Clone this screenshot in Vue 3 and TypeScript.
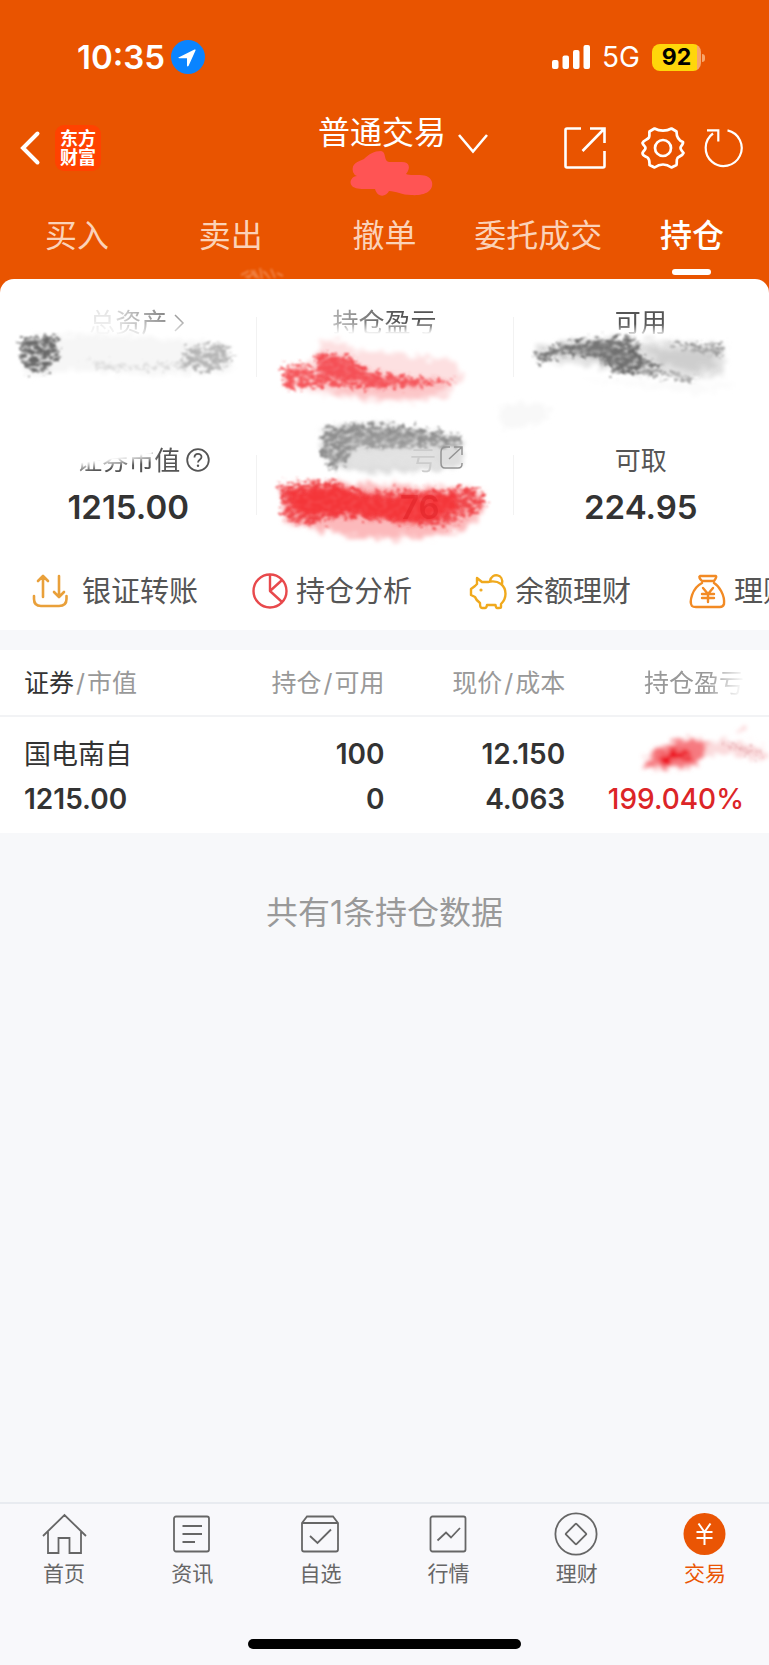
<script setup lang="ts">
import { ref } from 'vue'

interface Holding {
  name: string
  value: string
  amount: string
  available: string
  price: string
  cost: string
  ratio: string
}

const tabs: string[] = ['买入', '卖出', '撤单', '委托成交', '持仓']
const activeTab = ref('持仓')

const shortcuts = [
  { id: 'transfer', label: '银证转账' },
  { id: 'analysis', label: '持仓分析' },
  { id: 'balance', label: '余额理财' },
  { id: 'wealth', label: '理财' },
]

const holdings: Holding[] = [
  { name: '国电南自', value: '1215.00', amount: '100', available: '0', price: '12.150', cost: '4.063', ratio: '199.040%' },
]

const navItems = [
  { id: 'home', label: '首页' },
  { id: 'news', label: '资讯' },
  { id: 'watch', label: '自选' },
  { id: 'market', label: '行情' },
  { id: 'finance', label: '理财' },
  { id: 'trade', label: '交易' },
]
const activeNav = ref('trade')
</script>

<template>
  <div class="page">
    <header class="top">
      <div class="status">
        <div class="status-left">
          <span class="time">10:35</span>
          <svg class="locate" viewBox="0 0 34 34"><circle cx="17" cy="17" r="17" fill="#0a84ff" /><path d="M7.500 17.500 23.500 9.500Q25 9 24.500 10.500L17.500 26Q16.200 27 16 25.500V18.300H8.500Q6.800 18.200 7.500 17.500Z" fill="#fff" /></svg>
        </div>
        <div class="status-right">
          <svg class="signal" viewBox="0 0 38 24"><g fill="#fff"><rect y="15" width="6.500" height="9" rx="2" /><rect x="10.500" y="10.500" width="6.500" height="13.500" rx="2" /><rect x="21" y="5" width="6.500" height="19" rx="2" /><rect x="31.500" width="6.500" height="24" rx="2" /></g></svg>
          <span class="network">5G</span>
          <span class="battery"><span class="level">92</span></span>
        </div>
      </div>

      <div class="bar">
        <div class="bar-left">
          <button class="icon-btn" aria-label="返回"><svg class="back" viewBox="0 0 20 34"><path d="M17.500 2.500 3 17 17.500 31.500" fill="none" stroke="#fff" stroke-width="4" stroke-linecap="round" /></svg></button>
          <a class="logo" href="#home"><span>东方</span><span>财富</span></a>
        </div>
        <button class="account">
          普通交易
          <svg class="caret" viewBox="0 0 30 20"><path d="M1 1 15 17.500 29 1" fill="none" stroke="#fff" stroke-width="2.600" /></svg>
          <svg class="blob" viewBox="0 0 84 48"><path d="M3 22C1 13 8 12 14 9C19 4 24 1 31 1C37 2 33 11 39 12H50C60 11 61 18 56 24C62 27 79 21 82 32C84 42 73 46 61 45C52 45 46 41 39 41C37 46 28 49 25 39C16 39 6 40 2 36C-2 31 3 26 7 26Q4 25 3 22Z" fill="#ff5454" /></svg>
        </button>
        <div class="bar-right">
          <button class="icon-btn" aria-label="分享"><svg class="share" viewBox="0 0 42 42"><path d="M17 1.500H3Q1.500 1.500 1.500 3V39Q1.500 40.500 3 40.500H39Q40.500 40.500 40.500 39V24M26 1.500H40.500V16M40 2 18.500 24" fill="none" stroke="#fff" stroke-width="2.600" /></svg></button>
          <button class="icon-btn" aria-label="设置"><svg class="gear" viewBox="0 0 44 44"><path d="M13.500 2.500C17 4.500 18.500 4.700 22 4.700S27 4.500 30.500 2.500L35.500 5.500C35.500 10 36.500 14 42 16V17C41 20 39.500 20 39.500 22S41 24.500 42.500 27C41.500 30 36.500 30.500 36 33C35.500 35 36 37 35.500 39L30.500 41.500C27 39 25.500 38.500 22 38.500S17 39 13.500 41.500L8.500 39C8.500 36 9 33.500 6.500 31.500C4.500 30 1.500 30 1.500 27C2.500 24.500 4.500 24 4.500 22S2.500 20 1.500 17C2.500 14 6.500 14 8 11.500C9 9 8 7 8.500 5.500Z" fill="none" stroke="#fff" stroke-width="2.700" stroke-linejoin="round" /><circle cx="22" cy="22" r="8" fill="none" stroke="#fff" stroke-width="2.700" /></svg></button>
          <button class="icon-btn" aria-label="刷新"><svg class="refresh" viewBox="0 0 40 40"><path d="M23.500 2.400A18 18 0 1 1 9 5.500M3 2.300H14.300V13.500" fill="none" stroke="#fff" stroke-width="2.200" /></svg></button>
        </div>
      </div>

      <nav class="tabs">
        <button v-for="tab in tabs" :key="tab" class="tab" :class="{ active: tab === activeTab }" @click="activeTab = tab">{{ tab }}</button>
      </nav>
      <svg class="scuff" viewBox="0 0 44 12"><path d="M1 8 9 4M8 12 15 3M14 4 19 12M20 1 22 12M25 5 30 12M31 2 35 11M37 6 43 9M11 3 16 11M23 4 28 9M5 10 12 8" stroke="#f9b48d" stroke-width="2" opacity=".45" /></svg>
    </header>

    <main>
      <section class="card">
        <div class="summary">
          <div class="cell">
            <a class="label fade-total" href="#assets">总资产<svg class="after arrow" viewBox="0 0 12 18"><path d="M2 1 10 9 2 17" fill="none" stroke="#777" stroke-width="1.500" /></svg></a>
            <span class="figure"></span>
          </div>
          <div class="cell"><span class="label fade-gain">持仓盈亏</span><span class="figure"></span></div>
          <div class="cell"><span class="label fade-cash">可用</span><span class="figure"></span></div>
          <div class="cell">
            <span class="label"><span class="fade-market">证券市值</span><svg class="after" viewBox="0 0 24 24"><circle cx="12" cy="12" r="10.800" fill="none" stroke="#555" stroke-width="1.800" /><path d="M8.500 9.500C8.500 4.500 15.500 4.800 15.500 9C15.500 11.800 12 11.800 12 14.500" fill="none" stroke="#555" stroke-width="1.800" /><circle cx="12" cy="17.800" r="1.200" fill="#555" /></svg></span>
            <span class="figure">1215.00</span>
          </div>
          <div class="cell"><span class="label"></span><span class="figure"></span></div>
          <div class="cell"><span class="label">可取</span><span class="figure">224.95</span></div>

          <svg class="smudges" viewBox="0 0 769 280" preserveAspectRatio="none" aria-hidden="true">
            <defs>
              <filter id="brush" x="-10%" y="-30%" width="120%" height="160%">
                <feTurbulence type="fractalNoise" baseFrequency=".16 .24" numOctaves="4" seed="7" result="noise" />
                <feDisplacementMap in="SourceGraphic" in2="noise" scale="20" xChannelSelector="R" yChannelSelector="G" result="rough" />
                <feColorMatrix in="noise" type="matrix" values="0 0 0 0 0  0 0 0 0 0  0 0 0 0 0  0 0 3 0 -.7" result="grain" />
                <feComposite in="rough" in2="grain" operator="in" result="speckled" />
                <feGaussianBlur in="speckled" stdDeviation="1" />
              </filter>
              <filter id="wash" x="-10%" y="-30%" width="120%" height="160%">
                <feTurbulence type="fractalNoise" baseFrequency=".12 .25" numOctaves="3" seed="3" result="noise" />
                <feDisplacementMap in="SourceGraphic" in2="noise" scale="18" xChannelSelector="R" yChannelSelector="G" result="rough" />
                <feGaussianBlur in="rough" stdDeviation="2" />
              </filter>
            </defs>
            <g filter="url(#wash)">
              <path d="M22 38Q70 32 130 36T230 46L232 72Q160 76 110 72T25 78Z" fill="#f6f6f6" />
              <path d="M286 72Q300 62 316 60L322 40 345 42 355 50 455 60 462 80 450 96Q400 106 350 98L285 86Z" fill="#fde0e1" />
              <path d="M300 75 350 70 450 82 440 94Q390 104 340 94Z" fill="#fcc6c8" />
              <path d="M536 48Q580 35 640 40L724 46V74Q680 80 640 73T537 60Z" fill="#e2e2e2" />
              <path d="M323 130Q360 118 400 128L462 136V166Q400 176 345 170L322 155Z" fill="#dedede" />
              <path d="M280 186Q330 180 370 184L480 190 486 208 465 230Q400 245 340 234L285 222Z" fill="#fcb9bb" />
              <path d="M498 108Q530 98 552 108L540 124 502 130Z" fill="#f8f8f8" />
              <path d="M560 78 740 84 700 94 640 86Z" fill="#fbfbfb" />
            </g>
            <g filter="url(#brush)">
              <path d="M20 36 56 36 60 56 46 74 24 70Z" fill="#707070" />
              <path d="M26 42 50 40 48 60 32 66Z" fill="#666" />
              <path d="M185 48 222 42 234 62 212 70 180 68Z" fill="#b4b4b4" />
              <path d="M80 60 130 66 190 60 180 68 110 70Z" fill="#ddd" />
              <path d="M280 66 300 64 318 68 315 54 349 54 366 72 459 82 370 88Q320 84 285 90Z" fill="#f5565b" />
              <path d="M316 58 345 60 390 80 340 82Z" fill="#f44b51" />
              <path d="M534 54Q576 36 635 38L642 56 665 72 655 76 610 72 600 58Q570 48 541 65Z" fill="#757575" />
              <path d="M606 48 635 44 640 64 660 74 620 66Z" fill="#666" />
              <path d="M670 42 725 46 722 56 680 50Z" fill="#999" />
              <path d="M640 68 700 78 690 82 645 74Z" fill="#aaa" />
              <path d="M322 130Q350 120 400 126L462 136 460 148 405 140 360 146 336 172 322 156Z" fill="#8e8e8e" />
              <path d="M350 135 462 142 420 148 352 148Z" fill="#999" />
              <path d="M278 184 330 180 365 192 480 188 484 210 440 228 350 216 300 226 284 216Z" fill="#f0474c" />
            </g>
            <g filter="url(#wash)">
              <path d="M316 54 346 60 380 79 450 83 380 86 322 75Z" fill="#f55258" opacity=".85" />
              <path d="M560 48 610 42 636 56 630 68 606 60Z" fill="#777" opacity=".6" />
              <path d="M284 192 335 187 367 196 456 194 458 212 410 224 350 214 300 214Z" fill="#f53336" opacity=".85" />
              <path d="M645 48 715 52 714 66 690 72 653 60Z" fill="#ccc" opacity=".9" />
              <path d="M350 150 435 150 440 166 350 166Z" fill="#e2e2e2" />
              <path d="M340 136 400 132 445 140 400 142 345 144Z" fill="#999" opacity=".5" />
            </g>
            <text class="ghost-label" x="410" y="170">亏</text>
            <path d="M441 163V152Q441 147 446 147H450M454 147H462V155M462 147 449 159M462 163V164Q462 168 458 168H445Q441 168 441 163" fill="none" stroke="#949494" stroke-width="1.500" />
            <text class="ghost-value" x="400" y="219">76</text>
          </svg>
        </div>

        <div class="shortcuts">
          <a v-for="item in shortcuts" :key="item.id" class="shortcut" :class="item.id" :href="'#' + item.id">
            <svg viewBox="0 0 40 40" fill="none" stroke-linecap="round" stroke-linejoin="round">
              <g v-if="item.id === 'transfer'" stroke="#e9a03a" stroke-width="2.600"><path d="M2 21V24Q2 31 9 31H27Q34.500 31 34.500 24V21M11 22V1M6 6 11 1 16 6M27 1V21M22 17 27 22 32 17" /></g>
              <g v-else-if="item.id === 'analysis'" stroke="#e8494c" stroke-width="2.400"><circle cx="19" cy="16" r="16.500" /><path d="M19 0V16L31 27M19 16 30 6" /></g>
              <g v-else-if="item.id === 'balance'" stroke="#f0a91d" stroke-width="2.400"><path d="M18 7C22 6 27 6 31 9C37 14 37 23 31 29V32Q31 33 29 33H27Q26 33 25.500 30H17Q16.500 33 15 33H12Q10 33 10 28Q6 25 5 22L1 20V14L5 11 7 9V3L12 7ZM20 6C22-3 34-1 32 9" /><circle cx="11" cy="15" r="1" fill="#f0a91d" stroke-width="1.200" /></g>
              <g v-else stroke="#f28a24" stroke-width="2.400"><path d="M11 1H27Q28 2 25 6H13Q9 2 11 1ZM13 8C3 13 0 27 3 31Q4 32 7 32H31Q34 32 35 29C36 20 30 11 25 8M14 13 19 19 24 13M19 19V27M13 19H25M13 23H25" /></g>
            </svg>
            <span>{{ item.label }}</span>
          </a>
        </div>
      </section>

      <section class="positions">
        <table>
          <colgroup><col class="c1" /><col class="c2" /><col class="c3" /><col /></colgroup>
          <thead>
            <tr><th scope="col"><b>证券</b><i>/</i>市值</th><th scope="col">持仓<i>/</i>可用</th><th scope="col">现价<i>/</i>成本</th><th scope="col"><span class="fade-head">持仓盈亏</span></th></tr>
          </thead>
          <tbody>
            <tr v-for="row in holdings" :key="row.name">
              <td><span class="line name">{{ row.name }}</span><span class="line">{{ row.value }}</span></td>
              <td><span class="line">{{ row.amount }}</span><span class="line">{{ row.available }}</span></td>
              <td><span class="line">{{ row.price }}</span><span class="line">{{ row.cost }}</span></td>
              <td class="gain"><span class="line"></span><span class="line">{{ row.ratio }}</span></td>
            </tr>
          </tbody>
        </table>
        <svg class="row-smudge" viewBox="0 0 132 56" aria-hidden="true">
          <g filter="url(#wash)">
            <path d="M68 17 88 13 128 22 126 34 110 31 90 27 66 32Z" fill="#fbdadc" />
            <path d="M6 38 20 22 34 16 65 13 70 26 56 40 14 43Z" fill="#f67a80" />
            <path d="M18 33 30 25 54 23 50 34 24 37Z" fill="#ee0d1b" />
            <circle cx="106" cy="3" r="3.500" fill="#fbc9cc" />
          </g>
          <path d="M88 15 110 23 127 24M92 19 112 28 123 32" stroke="#c96e77" stroke-width="1.500" fill="none" opacity=".45" filter="url(#brush)" />
        </svg>
      </section>
      <p class="total">共有1条持仓数据</p>
    </main>

    <footer class="bottom">
      <nav class="bottom-nav">
        <a v-for="item in navItems" :key="item.id" :href="'#' + item.id" :class="{ on: item.id === activeNav }" @click.prevent="activeNav = item.id">
          <svg viewBox="0 0 46 46" fill="none" stroke="currentColor" stroke-width="1.800">
            <path v-if="item.id === 'home'" d="M2 25 23.500 4 45 25M7 21V42H17.500V27H28.500V42H40V21" />
            <g v-else-if="item.id === 'news'"><rect x="5" y="5.500" width="35" height="35" rx="2" /><path d="M13.500 15H33M13.500 23H33M13.500 31H26" /></g>
            <g v-else-if="item.id === 'watch'"><path d="M5 12 10 5.500H36L41 12V38.500Q41 40.500 39 40.500H7Q5 40.500 5 38.500ZM5 12H41M13 25 20.500 32 34 18.500" /></g>
            <g v-else-if="item.id === 'market'"><rect x="4.500" y="5.500" width="35" height="35" rx="2" /><path d="M11.500 29.500 20 21.500 25 26.500 34 17" /></g>
            <g v-else-if="item.id === 'finance'"><circle cx="22" cy="23" r="20.600" /><rect x="14.500" y="15.500" width="15" height="15" rx="1" transform="rotate(45 22 23)" /></g>
            <g v-else><circle cx="22.500" cy="23" r="21" fill="#ea5504" stroke="none" /><path d="M16.500 12.500 22.500 21 28.500 12.500M22.500 21V34M14.500 21H30.500M14.500 27H30.500" stroke="#fff" stroke-width="2" /></g>
          </svg>
          <span>{{ item.label }}</span>
        </a>
      </nav>
      <div class="home-indicator"></div>
    </footer>
  </div>
</template>

<style>
body {
  background: #f7f8fa;
}
</style>

<style scoped>
.page {
  display: flex;
  flex-direction: column;
  min-height: 100vh;
  background: #f7f8fa;
  color: #333;
  font-family: Inter, "Noto Sans CJK SC", sans-serif;
  overflow-x: hidden;
}
svg {
  display: block;
  overflow: visible;
}
button {
  border: 0;
  padding: 0;
  background: none;
  color: inherit;
  font: inherit;
  cursor: pointer;
}
a {
  color: inherit;
  text-decoration: none;
}
main {
  flex: 1;
}
.top {
  position: relative;
  background: #e95400;
  color: #fff;
  padding-bottom: 14px;
}
.status {
  display: flex;
  justify-content: space-between;
  align-items: center;
  height: 94px;
  padding: 10px 64px 0 77px;
}
.status-left,
.status-right {
  display: flex;
  align-items: center;
}
.status-left {
  gap: 6px;
}
.time {
  font-size: 33px;
  font-weight: 600;
}
.locate {
  width: 34px;
  height: 34px;
}
.signal {
  width: 38px;
  height: 24px;
}
.network {
  margin: 0 12px;
  font-size: 28px;
}
.battery {
  position: relative;
  width: 49px;
  height: 27px;
  margin-right: 4px;
  border-radius: 8px;
  background: linear-gradient(90deg, #ffd60a 92%, #f7a66c 92%);
}
.battery::after {
  content: "";
  position: absolute;
  left: 50px;
  top: 10px;
  width: 3px;
  height: 8px;
  border-radius: 0 4px 4px 0;
  background: #f7a66c;
}
.level {
  display: block;
  color: #000;
  font-size: 23px;
  font-weight: 700;
  line-height: 27px;
  text-align: center;
}
.bar {
  display: grid;
  grid-template-columns: 1fr auto 1fr;
  height: 88px;
  padding: 0 25px 0 20px;
}
.bar-left,
.bar-right {
  display: flex;
  align-items: center;
}
.bar-left {
  gap: 15px;
}
.bar-right {
  justify-content: flex-end;
}
.back {
  width: 20px;
  height: 34px;
}
.logo {
  display: flex;
  flex-direction: column;
  justify-content: center;
  align-items: center;
  width: 46px;
  height: 46px;
  border-radius: 9px;
  background: #ff4200;
  font-size: 18px;
  font-weight: 700;
  line-height: 19px;
}
.account {
  position: relative;
  align-self: start;
  font-size: 32px;
  line-height: 58px;
}
.caret {
  position: absolute;
  left: calc(100% + 12px);
  top: 30px;
  width: 30px;
  height: 20px;
}
.blob {
  position: absolute;
  left: 32px;
  top: 46px;
  width: 84px;
  height: 48px;
}
.share {
  width: 42px;
  height: 42px;
}
.gear {
  width: 44px;
  height: 44px;
  margin: 0 19px 0 35px;
}
.refresh {
  width: 40px;
  height: 40px;
}
.tabs {
  display: grid;
  grid-template-columns: repeat(5, 1fr);
}
.tab {
  position: relative;
  height: 87px;
  color: #fbd2b8;
  font-size: 32px;
  line-height: 87px;
}
.tab.active {
  color: #fff;
  font-weight: 500;
}
.tab.active::after {
  content: "";
  position: absolute;
  left: calc(50% - 20px);
  bottom: 4px;
  width: 39px;
  height: 6px;
  border-radius: 3px;
  background: #fff;
}
.scuff {
  position: absolute;
  left: 240px;
  bottom: 14px;
  width: 44px;
  height: 12px;
  filter: blur(1px);
}
.card {
  position: relative;
  margin-top: -14px;
  padding: 21px 0 8px;
  border-radius: 14px 14px 0 0;
  background: #fff;
}
.summary {
  position: relative;
  display: grid;
  grid-template-columns: repeat(3, 1fr);
  row-gap: 46px;
}
.cell {
  position: relative;
  display: flex;
  flex-direction: column;
  align-items: center;
}
.cell:not(:nth-child(3n + 1))::before {
  content: "";
  position: absolute;
  left: 0;
  top: 17px;
  width: 1px;
  height: 60px;
  background: #f2f2f2;
}
.label {
  position: relative;
  height: 46px;
  color: #555;
  font-size: 26px;
  line-height: 46px;
}
.figure {
  height: 46px;
  font-size: 33px;
  font-weight: 600;
  line-height: 46px;
}
.after {
  position: absolute;
  left: calc(100% + 6px);
  top: 10px;
  width: 24px;
  height: 24px;
}
.after.arrow {
  top: 14px;
  width: 12px;
  height: 18px;
}
.fade-total {
  margin-right: -24px;
  padding-right: 24px;
  opacity: .7;
  mask-image: linear-gradient(90deg, rgba(0, 0, 0, .2) 20%, rgba(0, 0, 0, .6) 45%, #000 75%), linear-gradient(#000 40%, rgba(0, 0, 0, .25) 75%);
  mask-composite: intersect;
}
.fade-total .after {
  left: calc(100% - 18px);
}
.fade-gain {
  mask-image: linear-gradient(#000 48%, transparent 74%), linear-gradient(90deg, rgba(0, 0, 0, .45), #000 60%);
  mask-composite: intersect;
}
.fade-cash {
  mask-image: linear-gradient(#000 52%, transparent 80%);
}
.fade-market {
  mask-image: linear-gradient(172deg, transparent 40%, #000 62%), linear-gradient(90deg, transparent 72%, #000 80%);
}
.smudges {
  position: absolute;
  left: 0;
  top: 0;
  width: 100%;
  height: 280px;
  pointer-events: none;
}
.ghost-label {
  fill: #ccc;
  font-size: 26px;
}
.ghost-value {
  fill: #d71920;
  font-size: 33px;
  font-weight: 600;
  opacity: .4;
}
.shortcuts {
  display: flex;
  height: 60px;
  margin-top: 32px;
  padding-left: 32px;
  overflow: hidden;
}
.shortcut {
  display: flex;
  flex: 0 0 219px;
  align-items: center;
  gap: 5px;
  color: #555;
  font-size: 29px;
  line-height: 62px;
  white-space: nowrap;
}
.shortcut.transfer {
  gap: 10px;
}
.shortcut svg {
  width: 40px;
  height: 40px;
  padding-top: 6px;
}
.positions {
  position: relative;
  margin-top: 20px;
  background: #fff;
}
table {
  width: 100%;
  border-collapse: collapse;
  table-layout: fixed;
}
.c1 {
  width: 26.500%;
}
.c2,
.c3 {
  width: 23.500%;
}
th,
td {
  padding: 0;
  text-align: right;
}
th:first-child,
td:first-child {
  padding-left: 24px;
  text-align: left;
}
th:last-child,
td:last-child {
  padding-right: 25px;
}
th {
  height: 65px;
  border-bottom: 2px solid #f2f3f5;
  color: #999;
  font-size: 25px;
  font-weight: 400;
  line-height: 36px;
  white-space: nowrap;
}
th b {
  color: #333;
  font-weight: 400;
}
th i {
  margin: 0 2px;
  font-style: normal;
}
td {
  padding-top: 15px;
  padding-bottom: 11px;
}
.line {
  display: block;
  height: 45px;
  font-size: 28px;
  font-weight: 600;
  line-height: 45px;
}
.name {
  font-size: 27px;
  font-weight: 400;
}
.gain .line {
  color: #dc2527;
  font-weight: 500;
}
.fade-head {
  mask-image: linear-gradient(100deg, #000 62%, transparent 98%);
}
.row-smudge {
  position: absolute;
  right: 0;
  top: 76px;
  width: 132px;
  height: 56px;
}
.total {
  margin: 58px 0;
  color: #999;
  font-size: 32px;
  line-height: 44px;
  text-align: center;
}
.bottom {
  border-top: 2px solid #e8ebf0;
  background: #f8f8fb;
}
.bottom-nav {
  display: grid;
  grid-template-columns: repeat(6, 1fr);
  padding-top: 7px;
}
.bottom-nav a {
  display: flex;
  flex-direction: column;
  align-items: center;
  color: #666;
  font-size: 21px;
  line-height: 34px;
}
.bottom-nav a.on {
  color: #ea5504;
}
.bottom-nav svg {
  width: 46px;
  height: 46px;
}
.home-indicator {
  width: 35.500%;
  height: 10px;
  margin: 48px auto 16px;
  border-radius: 5px;
  background: #000;
}
</style>
